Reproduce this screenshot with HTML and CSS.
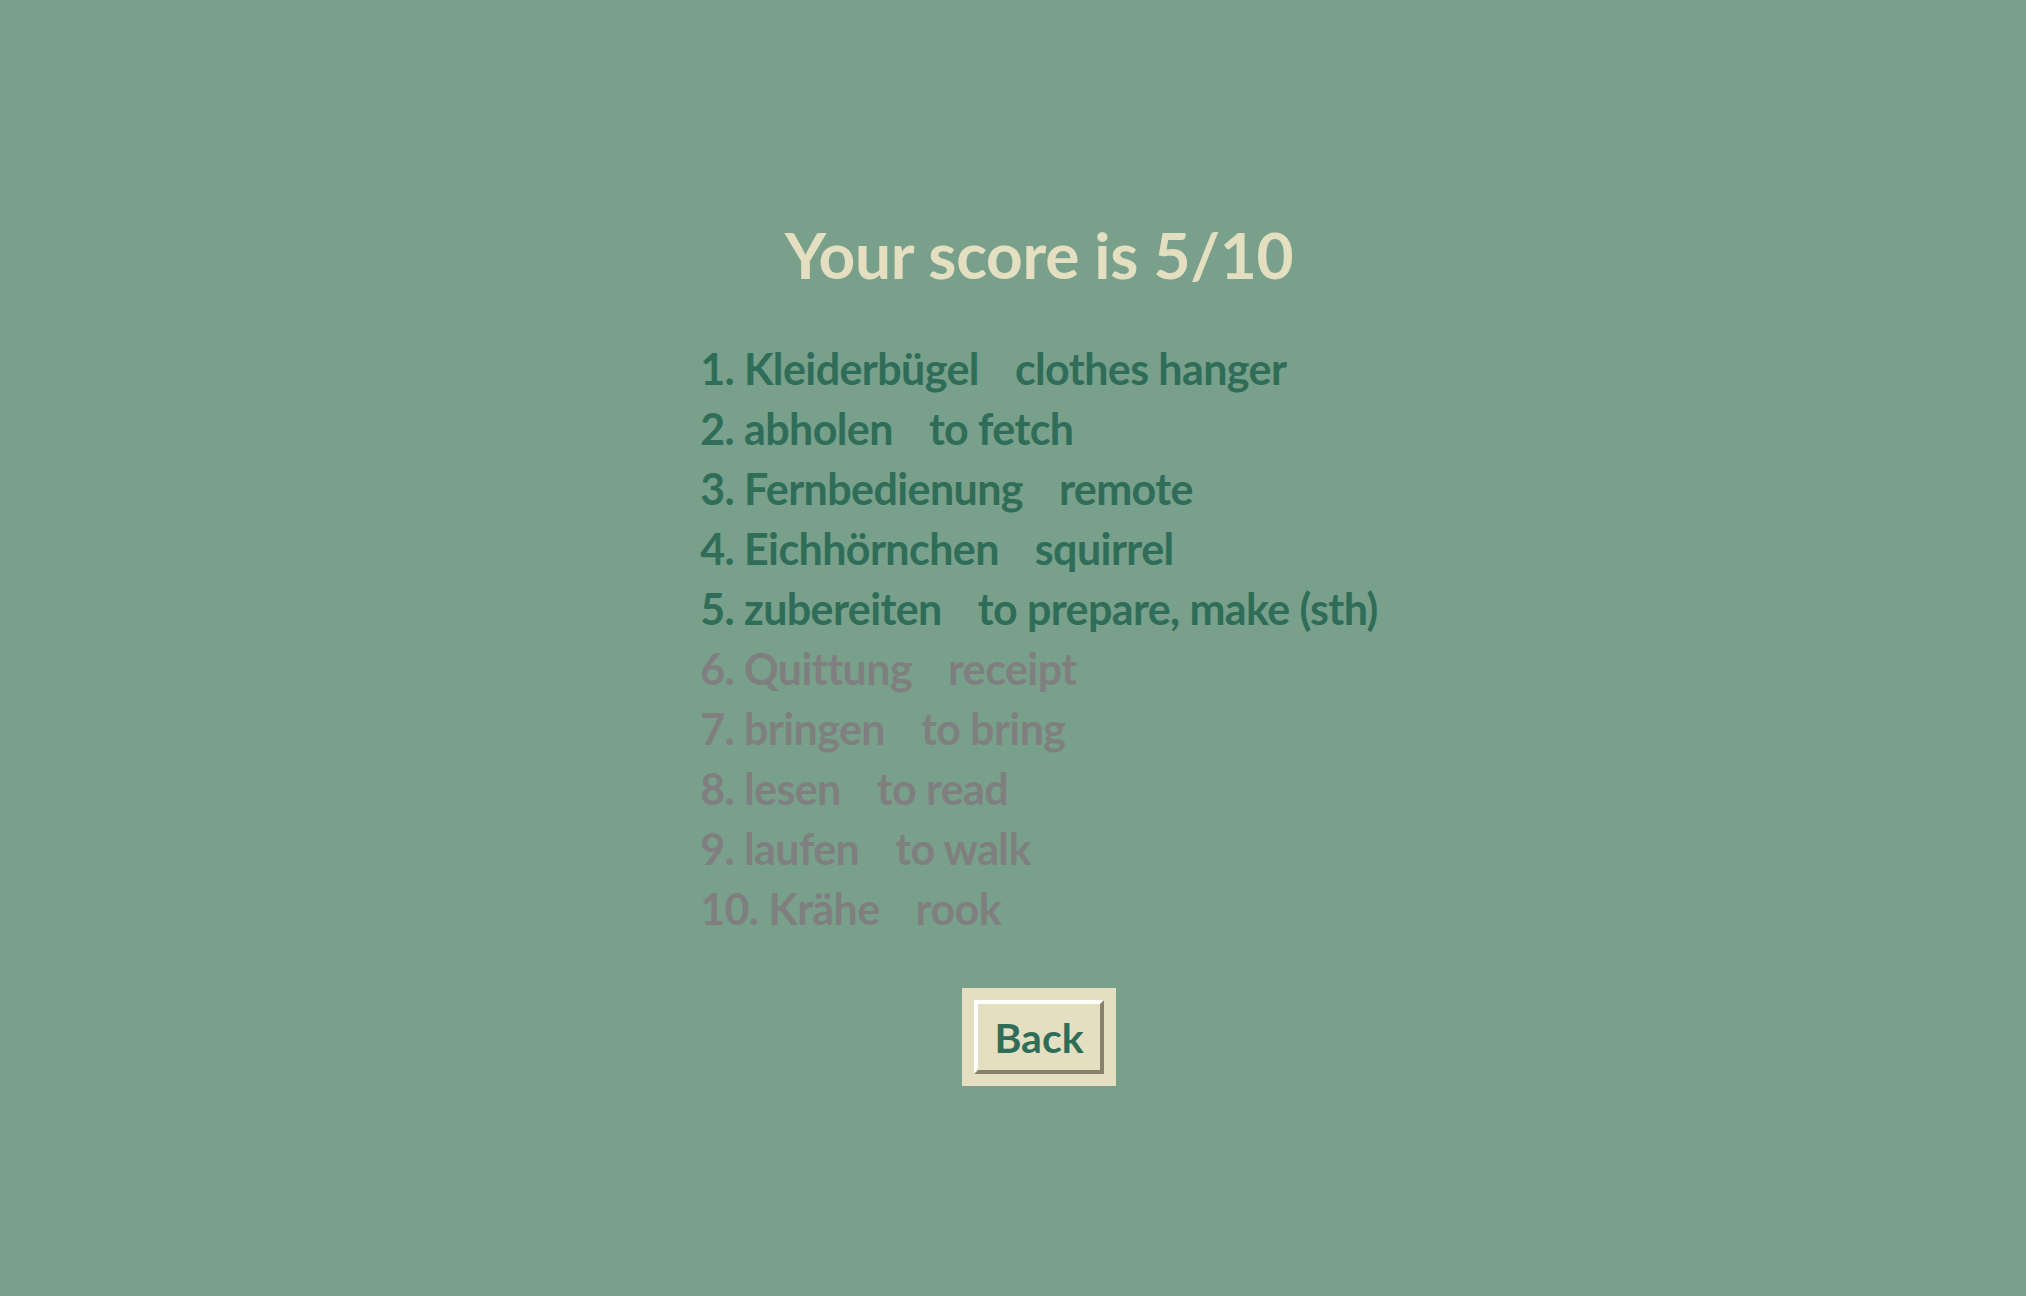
FILE: index.html
```html
<!DOCTYPE html>
<html lang="en">
<head>
<meta charset="utf-8">
<title>Score</title>
<link rel="stylesheet" href="styles.css">
</head>
<body>
<main class="page">
  <h1 class="title">Your score is 5/10</h1>
  <ul class="results">
    <li class="row ok"><span class="num">1.</span> Kleiderbügel<span class="tr">clothes hanger</span></li>
    <li class="row ok"><span class="num">2.</span> abholen<span class="tr">to fetch</span></li>
    <li class="row ok"><span class="num">3.</span> Fernbedienung<span class="tr">remote</span></li>
    <li class="row ok"><span class="num">4.</span> Eichhörnchen<span class="tr">squirrel</span></li>
    <li class="row ok"><span class="num">5.</span> zubereiten<span class="tr">to prepare, make (sth)</span></li>
    <li class="row bad"><span class="num">6.</span> Quittung<span class="tr">receipt</span></li>
    <li class="row bad"><span class="num">7.</span> bringen<span class="tr">to bring</span></li>
    <li class="row bad"><span class="num">8.</span> lesen<span class="tr">to read</span></li>
    <li class="row bad"><span class="num">9.</span> laufen<span class="tr">to walk</span></li>
    <li class="row bad"><span class="num">10.</span> Krähe<span class="tr">rook</span></li>
  </ul>
  <div class="btn-frame">
    <button class="btn" type="button">Back</button>
  </div>
</main>
</body>
</html>
```

FILE: styles.css
```css
html, body {
  margin: 0;
  padding: 0;
  background: #79a08b;
}
body {
  font-family: Lato, "Open Sans", sans-serif;
  min-height: 1296px;
}
.page {
  display: flex;
  flex-direction: column;
  align-items: center;
  padding: 216px 0 0 52px;
}
.title {
  margin: 0;
  font-size: 64px;
  line-height: 78px;
  font-weight: 700;
  letter-spacing: -0.3px;
  color: #e3dfc0;
}
.results {
  list-style: none;
  margin: 45px 0 0 0;
  padding: 0;
  font-size: 43px;
  line-height: 60px;
  font-weight: 700;
  letter-spacing: -0.6px;
}
.row { white-space: nowrap; }
.ok { color: #2f6d59; }
.bad { color: #807f80; }
.tr { margin-left: 36px; }
.btn-frame {
  margin-top: 49px;
  background: #e3dfc0;
  padding: 12px;
  display: flex;
}
.btn {
  font-family: inherit;
  font-size: 41px;
  font-weight: 700;
  color: #2f6d59;
  background: #e3dfc0;
  border: 4px solid;
  border-color: #ffffff #86836a #86836a #ffffff;
  width: 130px;
  height: 74px;
  padding: 0;
  line-height: 1;
}
```
